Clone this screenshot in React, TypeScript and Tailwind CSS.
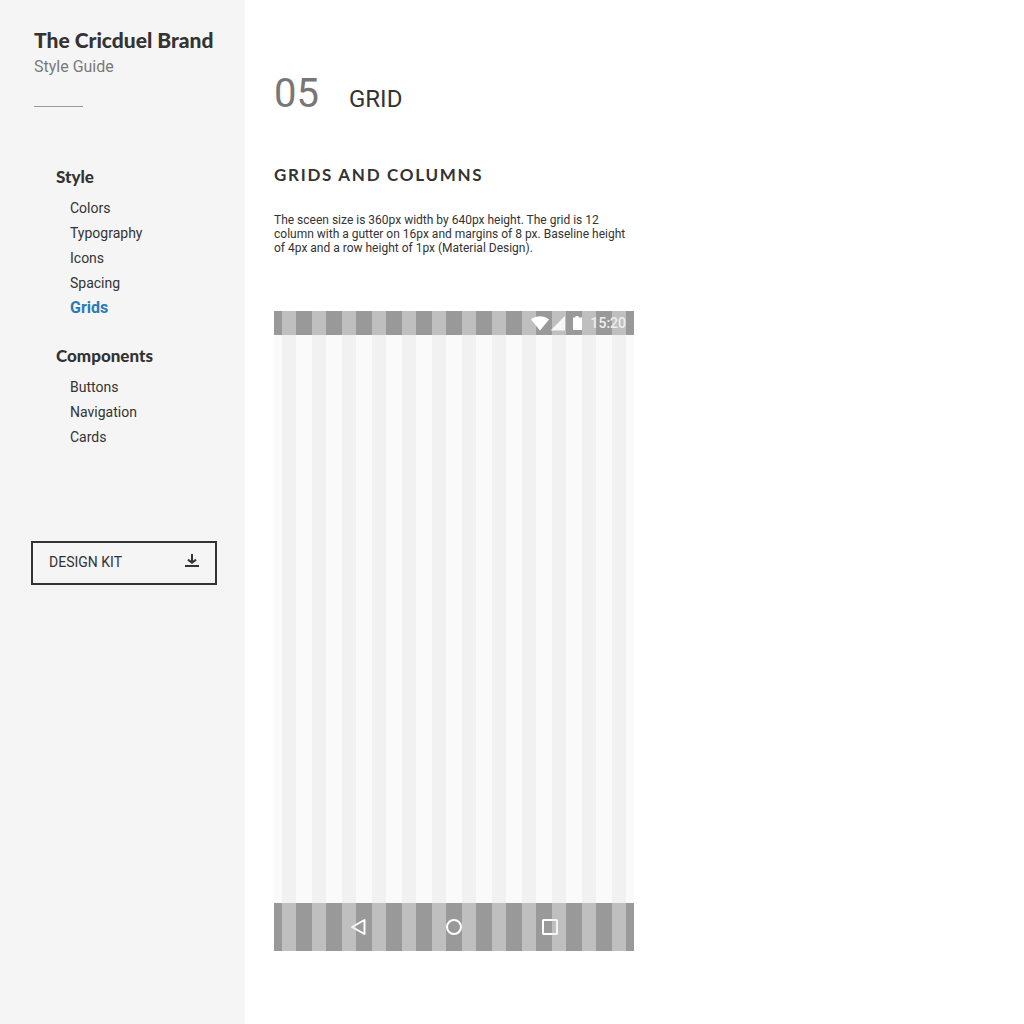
import React from "react";

type NavItem = { label: string; active?: boolean };
type NavGroup = { title: string; items: NavItem[] };

const groups: NavGroup[] = [
  {
    title: "Style",
    items: [
      { label: "Colors" },
      { label: "Typography" },
      { label: "Icons" },
      { label: "Spacing" },
      { label: "Grids", active: true },
    ],
  },
  {
    title: "Components",
    items: [{ label: "Buttons" }, { label: "Navigation" }, { label: "Cards" }],
  },
];

function DownloadIcon() {
  return (
    <svg width="14" height="16" viewBox="0 0 14 16" fill="none" stroke="#333333" strokeWidth="2" aria-hidden="true">
      <path d="M7 0v9M3 5.600l4 3.200L11 5.600M0 12h14" />
    </svg>
  );
}

function Sidebar() {
  return (
    <aside className="w-[245px] shrink-0 bg-[#f5f5f5] pt-7 pr-7 pb-8 pl-[31px]">
      <header className="pl-[3px]">
        <h1 className="font-['Lato',sans-serif] text-[21px] leading-6 font-black whitespace-nowrap">The Cricduel Brand</h1>
        <p className="mt-[5px] text-base leading-5 text-[#7a7a7a]">Style Guide</p>
        <hr className="mt-[29px] w-[49px] border-[#999999]" />
      </header>

      <nav className="mt-[58px] flex flex-col gap-6 pl-[25px]">
        {groups.map((group) => (
          <section key={group.title}>
            <h2 className="font-['Lato',sans-serif] text-[17px] leading-6 font-black">{group.title}</h2>
            <ul className="mt-[7px] pl-[14px]">
              {group.items.map((item) => (
                <li key={item.label}>
                  <a
                    href={"#" + item.label.toLowerCase()}
                    aria-current={item.active ? "page" : undefined}
                    className={
                      item.active
                        ? "block text-base leading-6 font-bold text-[#2a7ab5]"
                        : "block text-sm leading-[25px]"
                    }
                  >
                    {item.label}
                  </a>
                </li>
              ))}
            </ul>
          </section>
        ))}
      </nav>

      <button
        type="button"
        className="mt-[91px] flex h-11 w-full items-center justify-between border-2 border-[#333333] px-4 pb-[2px] text-sm"
      >
        DESIGN KIT
        <DownloadIcon />
      </button>
    </aside>
  );
}

function StatusBar() {
  return (
    <div className="flex h-6 items-center justify-end bg-[#999999] pr-2 text-sm font-medium text-[#eeeeee]">
      <svg className="relative z-10" width="52" height="16" viewBox="0 0 52 16" fill="#ffffff" aria-hidden="true">
        <path d="M1 4.400C6.500 0.200 13.500 0.200 19 4.400L10 15.500Z" />
        <path d="M35 1v14.500H20.500Z" fillOpacity="0.88" />
        <path d="M43 2.500h2.500V1h3v1.500H52V15h-9Z" />
      </svg>
      <span className="relative z-10 ml-2">15:20</span>
    </div>
  );
}

function NavigationBar() {
  return (
    <div className="flex h-12 items-center justify-center gap-20 bg-[#999999]">
      <svg width="16" height="18" viewBox="0 0 16 18" fill="none" stroke="#fff" strokeWidth="2" strokeLinejoin="round" aria-hidden="true">
        <path d="M14.500 2v14L2 9Z" />
      </svg>
      <svg width="16" height="16" viewBox="0 0 16 16" fill="none" stroke="#fff" strokeWidth="2" aria-hidden="true">
        <circle cx="8" cy="8" r="7" />
      </svg>
      <svg width="16" height="16" viewBox="0 0 16 16" fill="none" stroke="#fff" strokeWidth="2" aria-hidden="true">
        <rect x="1" y="1" width="14" height="14" rx="0.500" />
      </svg>
    </div>
  );
}

function PhoneGrid() {
  return (
    <div className="relative mt-14 w-full max-w-[360px]">
      <StatusBar />
      <div className="h-[568px] bg-[#fafafa]" />
      <NavigationBar />
      <div className="absolute inset-0 grid grid-cols-12 gap-4 px-2" aria-hidden="true">
        {Array.from({ length: 12 }, (_, i) => (
          <div key={i} className="bg-[#e7e7e7]/48" />
        ))}
      </div>
    </div>
  );
}

export default function App() {
  return (
    <div className="flex min-h-screen bg-white font-['Roboto',sans-serif] text-[#333333]">
      <Sidebar />
      <main className="min-w-0 flex-1 px-[29px] pt-[70px] pb-16">
        <div className="flex items-baseline gap-[30px]">
          <span className="text-[40px] leading-[48px] text-[#777777]">05</span>
          <h2 className="text-2xl">GRID</h2>
        </div>
        <h3 className="mt-[45px] font-['Lato',sans-serif] text-[17px] leading-6 font-bold tracking-widest">
          GRIDS AND COLUMNS
        </h3>
        <p className="mt-[26px] max-w-[360px] text-xs leading-[14px]">
          The sceen size is 360px width by 640px height. The grid is 12 column with a gutter on 16px and margins of 8
          px. Baseline height of 4px and a row height of 1px (Material Design).
        </p>
        <PhoneGrid />
      </main>
    </div>
  );
}
